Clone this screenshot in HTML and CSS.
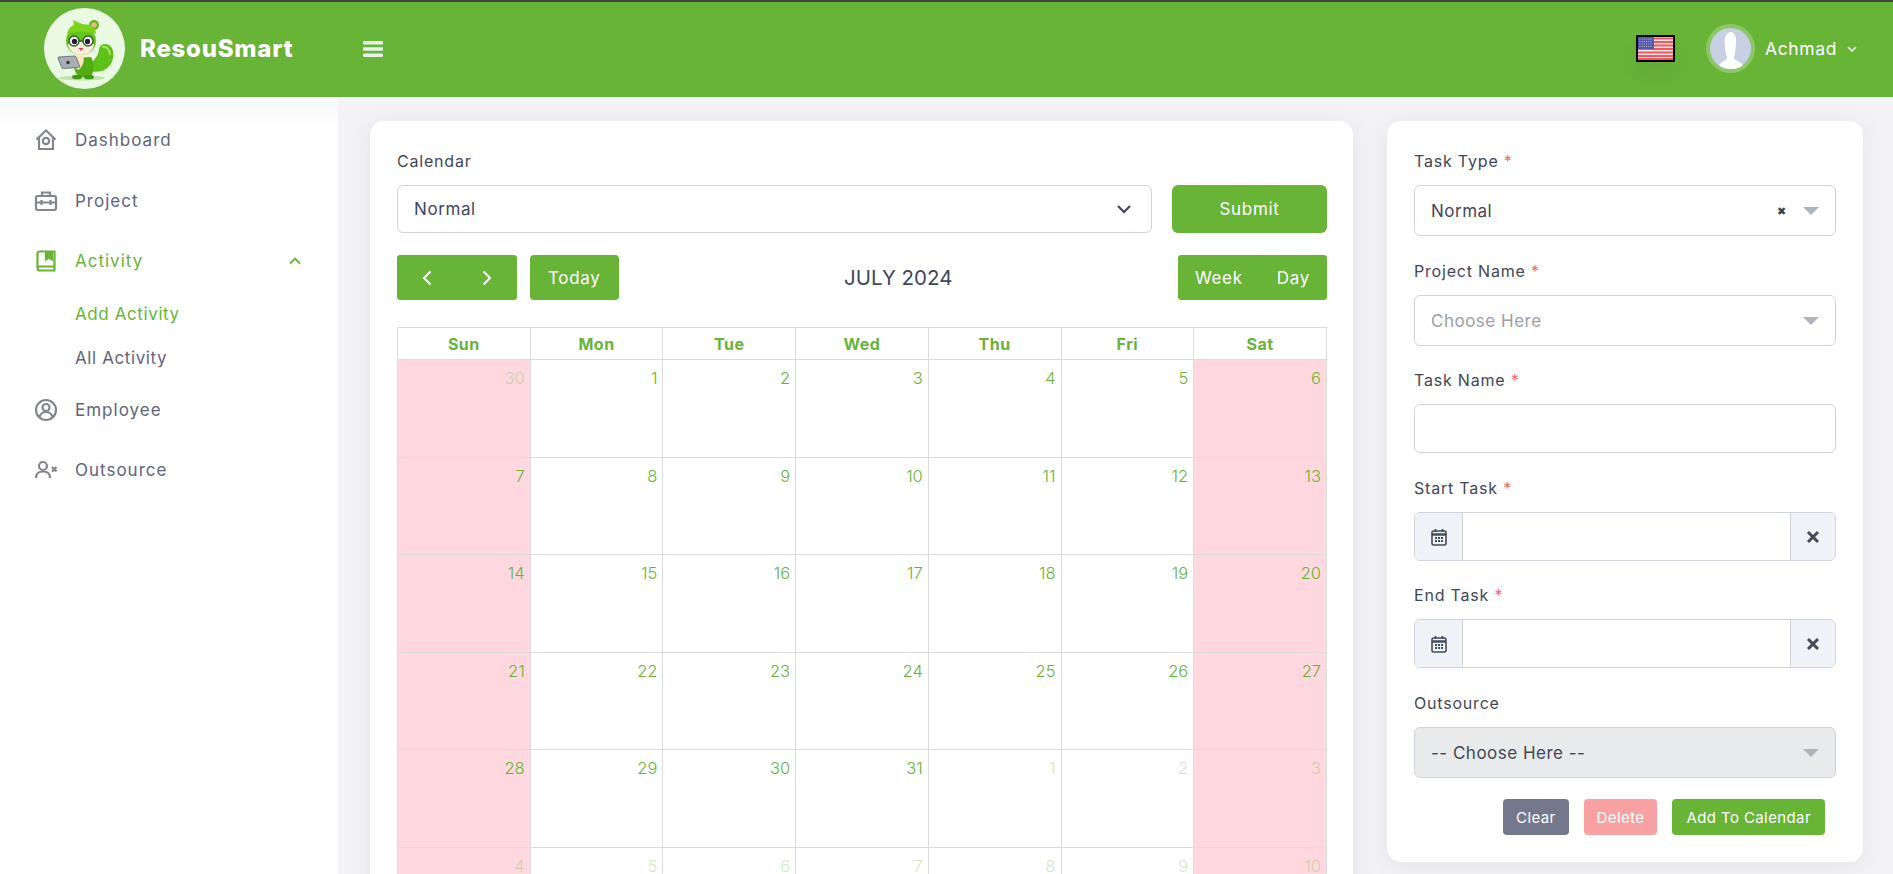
FILE: index.html
```html
<!DOCTYPE html>
<html lang="en">
<head>
	<meta charset="UTF-8">
	<title>ResouSmart - Add Activity</title>
	<link rel="stylesheet" href="styles.css">
</head>
<body>
	<header class="topbar">
		<div class="logo-circle">
			<svg viewBox="0 0 81 81" width="81" height="81">
				<ellipse cx="38" cy="70" rx="23" ry="2.5" fill="#bfe3ae"/>
				<path d="M46 63c11 3 21-2 23-13 2-9-3-15-9-14-5 1-5 6-6 10-2 5-9 9-8 17z" fill="#5fc01a"/>
				<path d="M58 39c5-1 8 3 8 8" stroke="#a2e35a" stroke-width="2" fill="none"/>
				<path d="M30 50c-1 10 1 18 8 19h8c4-3 5-14 1-20z" fill="#52ad12"/>
				<path d="M29 48c-1 7 1 12 5 14 5-3 7-10 5-15z" fill="#fbe3c0"/>
				<ellipse cx="33" cy="69" rx="5" ry="2.3" fill="#3f9a12"/>
				<ellipse cx="45" cy="69" rx="5" ry="2.3" fill="#3f9a12"/>
				<circle cx="50" cy="17" r="5" fill="#58b814"/>
				<circle cx="50" cy="17" r="2.800" fill="#f2b48c"/>
				<ellipse cx="37" cy="33" rx="15" ry="14" fill="#63c41d"/>
				<path d="M23 26c1-5 4-8 7-9l-1-5 9 4 9 1c3 2 5 5 5 9-9-3-19-3-29 0z" fill="#7ed321"/>
				<path d="M24 37c2-5 8-5 13-3 5-2 11-2 13 3-1 6-7 10-13 10s-12-4-13-10z" fill="#fdeedb"/>
				<circle cx="30" cy="33" r="5" fill="#fff" stroke="#35602c" stroke-width="1.500"/>
				<circle cx="44" cy="33" r="5" fill="#fff" stroke="#35602c" stroke-width="1.500"/>
				<circle cx="30.500" cy="33.500" r="2.700" fill="#223"/>
				<circle cx="43.500" cy="33.500" r="2.700" fill="#223"/>
				<path d="M35 33h4" stroke="#35602c" stroke-width="1.400"/>
				<path d="M34.500 40h5l-2.500 3z" fill="#d8455a"/>
				<path d="M15 49l15-1c1 0 2 .5 2.500 2l3 8c.3 1-.3 1.500-1 1.500l-15 1c-1 0-1.500-.5-2-1.500l-3.500-9c-.2-.5.2-1 1-1z" fill="#a9aeb5" stroke="#5d6269" stroke-width=".8"/>
				<circle cx="24" cy="54.500" r="1.700" fill="#333"/>
			</svg>
		</div>
		<div class="brand">ResouSmart</div>
		<svg class="burger" viewBox="0 0 20 16" width="20" height="16">
			<rect width="20" height="3.500" y="0" rx="1"/>
			<rect width="20" height="3.500" y="6.200" rx="1"/>
			<rect width="20" height="3.500" y="12.500" rx="1"/>
		</svg>
		<div class="topbar-right">
			<svg class="flag" viewBox="0 0 39 27" width="39" height="27">
				<rect width="39" height="27" fill="#000"/>
				<rect x="2" y="2" width="35" height="23" fill="#fbe3e3"/>
				<path d="M2 3.500h35M2 7h35M2 10.500h35M2 14h35M2 17.500h35M2 21h35M2 24h35" stroke="#ee5a60" stroke-width="1.900"/>
				<rect x="2" y="2" width="16" height="12" fill="#5158a8"/>
				<path d="M3.500 4h13M3.500 6.500h13M3.500 9h13M3.500 11.500h13" stroke="#b9bde0" stroke-width="1" stroke-dasharray="1 1.200"/>
			</svg>
			<div class="avatar">
				<svg viewBox="0 0 41 41" width="41" height="41">
					<circle cx="20.500" cy="20.500" r="20.500" fill="#c8d0e3"/>
					<path d="M9 37c3-4 7-4 8-7-2-8-3-14-2-20 1-4 3-6 6-6 3 0 5 4 5 9 0 6-1 12-2 17 1 3 6 3 9 7-3 3-8 4-12 4s-9-1-12-4z" fill="#fff"/>
				</svg>
			</div>
			<span class="user-name">Achmad</span>
			<svg class="user-caret" viewBox="0 0 10 6" width="10" height="6"><path d="M1 1l4 4 4-4" fill="none" stroke="#fff" stroke-width="1.500"/></svg>
		</div>
	</header>

	<div class="layout">
		<aside class="sidebar">
			<a class="nav-item">
				<svg class="nav-icon" viewBox="0 0 24 24"><path d="M2.500 11.500L12 2.500l9.500 9M5 9.500V21h14V9.500"/><circle cx="12" cy="13" r="3.200"/></svg>
				Dashboard
			</a>
			<a class="nav-item">
				<svg class="nav-icon" viewBox="0 0 24 24"><rect x="2" y="7" width="20" height="14" rx="2"/><path d="M8 7V3.500h8V7M2 13.500h20M7.500 11v5M16.500 11v5"/></svg>
				Project
			</a>
			<a class="nav-item active">
				<svg class="nav-icon" viewBox="0 0 24 24"><path d="M20.500 17.500H5.500a2 2 0 0 0 0 4h15V2.500H5.500a2 2 0 0 0-2 2v15"/><path d="M12 2.500v8l3-2 3 2v-8" fill="#67b437"/></svg>
				Activity
				<svg class="nav-caret" viewBox="0 0 12 8" width="12" height="8"><path d="M1 6.500l5-5 5 5" fill="none" stroke="#67b437" stroke-width="1.800"/></svg>
			</a>
			<div class="subnav">
				<a class="sub-item active">Add Activity</a>
				<a class="sub-item">All Activity</a>
			</div>
			<a class="nav-item">
				<svg class="nav-icon" viewBox="0 0 24 24"><circle cx="12" cy="12" r="10"/><circle cx="12" cy="9.500" r="3.500"/><path d="M5.500 19c1-3.500 3.500-5 6.500-5s5.500 1.500 6.500 5"/></svg>
				Employee
			</a>
			<a class="nav-item">
				<svg class="nav-icon" viewBox="0 0 24 24"><circle cx="9" cy="8" r="4"/><path d="M2 20c0-4.500 3-6.500 7-6.500s7 2 7 6.500M18 9l4.500 4.500M22.500 9L18 13.500"/></svg>
				Outsource
			</a>
		</aside>

		<main class="content">
			<section class="card calendar-card">
				<label class="field-label">Calendar</label>
				<div class="calendar-select-row">
					<div class="select-box">
						Normal
						<svg class="select-chevron" viewBox="0 0 16 10" width="16" height="10"><path d="M2 2l6 6 6-6" fill="none" stroke="#3b4350" stroke-width="2"/></svg>
					</div>
					<button class="btn submit-btn">Submit</button>
				</div>
				<div class="calendar-toolbar">
					<div class="toolbar-left">
						<div class="btn-group">
							<button class="btn arrow-btn"><svg viewBox="0 0 10 16" width="10" height="16"><path d="M8.500 1.500L2 8l6.500 6.500" fill="none" stroke="#fff" stroke-width="2"/></svg></button>
							<button class="btn arrow-btn"><svg viewBox="0 0 10 16" width="10" height="16"><path d="M1.500 1.500L8 8l-6.500 6.500" fill="none" stroke="#fff" stroke-width="2"/></svg></button>
						</div>
						<button class="btn tool-btn">Today</button>
					</div>
					<h2 class="calendar-title">JULY 2024</h2>
					<div class="btn-group">
						<button class="btn tool-btn">Week</button>
						<button class="btn tool-btn">Day</button>
					</div>
				</div>
				<table class="month">
					<thead>
						<tr><th>Sun</th><th>Mon</th><th>Tue</th><th>Wed</th><th>Thu</th><th>Fri</th><th>Sat</th></tr>
					</thead>
					<tbody>
						<tr><td class="off other"><span>30</span></td><td><span>1</span></td><td><span>2</span></td><td><span>3</span></td><td><span>4</span></td><td><span>5</span></td><td class="off"><span>6</span></td></tr>
						<tr><td class="off"><span>7</span></td><td><span>8</span></td><td><span>9</span></td><td><span>10</span></td><td><span>11</span></td><td><span>12</span></td><td class="off"><span>13</span></td></tr>
						<tr><td class="off"><span>14</span></td><td><span>15</span></td><td><span>16</span></td><td><span>17</span></td><td><span>18</span></td><td><span>19</span></td><td class="off"><span>20</span></td></tr>
						<tr><td class="off"><span>21</span></td><td><span>22</span></td><td><span>23</span></td><td><span>24</span></td><td><span>25</span></td><td><span>26</span></td><td class="off"><span>27</span></td></tr>
						<tr><td class="off"><span>28</span></td><td><span>29</span></td><td><span>30</span></td><td><span>31</span></td><td class="other"><span>1</span></td><td class="other"><span>2</span></td><td class="off other"><span>3</span></td></tr>
						<tr><td class="off other"><span>4</span></td><td class="other"><span>5</span></td><td class="other"><span>6</span></td><td class="other"><span>7</span></td><td class="other"><span>8</span></td><td class="other"><span>9</span></td><td class="off other"><span>10</span></td></tr>
					</tbody>
				</table>
			</section>

			<section class="card form-card">
				<div class="form-group">
					<label class="field-label">Task Type <i>*</i></label>
					<div class="select2">
						<span>Normal</span>
						<span class="select2-clear">&#10006;</span>
						<span class="select2-arrow"></span>
					</div>
				</div>
				<div class="form-group">
					<label class="field-label">Project Name <i>*</i></label>
					<div class="select2">
						<span class="placeholder">Choose Here</span>
						<span class="select2-arrow"></span>
					</div>
				</div>
				<div class="form-group">
					<label class="field-label">Task Name <i>*</i></label>
					<input class="text-input" type="text">
				</div>
				<div class="form-group">
					<label class="field-label">Start Task <i>*</i></label>
					<div class="date-group">
						<span class="addon">
							<svg viewBox="0 0 16 18" width="16" height="18"><rect x="1" y="3" width="14" height="14" rx="1.500" fill="none" stroke="#434c5c" stroke-width="1.600"/><path d="M1 6.500h14" stroke="#434c5c" stroke-width="2.400"/><path d="M4.500 1v3M11.500 1v3" stroke="#434c5c" stroke-width="1.800"/><path d="M4 10h8M4 13h8" stroke="#434c5c" stroke-width="1.800" stroke-dasharray="2 1"/></svg>
						</span>
						<input class="date-input" type="text">
						<span class="addon addon-x">
							<svg viewBox="0 0 14 14" width="14" height="14"><path d="M2 2l10 10M12 2L2 12" stroke="#454c58" stroke-width="3"/></svg>
						</span>
					</div>
				</div>
				<div class="form-group">
					<label class="field-label">End Task <i>*</i></label>
					<div class="date-group">
						<span class="addon">
							<svg viewBox="0 0 16 18" width="16" height="18"><rect x="1" y="3" width="14" height="14" rx="1.500" fill="none" stroke="#434c5c" stroke-width="1.600"/><path d="M1 6.500h14" stroke="#434c5c" stroke-width="2.400"/><path d="M4.500 1v3M11.500 1v3" stroke="#434c5c" stroke-width="1.800"/><path d="M4 10h8M4 13h8" stroke="#434c5c" stroke-width="1.800" stroke-dasharray="2 1"/></svg>
						</span>
						<input class="date-input" type="text">
						<span class="addon addon-x">
							<svg viewBox="0 0 14 14" width="14" height="14"><path d="M2 2l10 10M12 2L2 12" stroke="#454c58" stroke-width="3"/></svg>
						</span>
					</div>
				</div>
				<div class="form-group">
					<label class="field-label">Outsource</label>
					<div class="select2 disabled">
						<span>-- Choose Here --</span>
						<span class="select2-arrow"></span>
					</div>
				</div>
				<div class="form-actions">
					<button class="btn small-btn clear-btn">Clear</button>
					<button class="btn small-btn delete-btn">Delete</button>
					<button class="btn small-btn add-btn">Add To Calendar</button>
				</div>
			</section>
		</main>
	</div>
</body>
</html>
```

FILE: styles.css
```css
* {
	box-sizing: border-box;
}

html, body {
	height: 100%;
}

body {
	margin: 0;
	overflow: hidden;
	background-color: #f3f3f7;
	font-family: "Inter", "Noto Sans", sans-serif;
	font-size: 15px;
	color: #3f4757;
}

.topbar {
	display: flex;
	align-items: center;
	height: 97px;
	padding-left: 44px;
	padding-bottom: 2px;
	border-top: 2px solid #454545;
	background-color: #67b437;
}

.logo-circle {
	width: 81px;
	height: 81px;
	border-radius: 50%;
	background-color: #e9f9e2;
	overflow: hidden;
}

.brand {
	margin-left: 15px;
	width: 223px;
	font-size: 24px;
	font-weight: 800;
	letter-spacing: .75px;
	color: #fff;
}

.burger {
	fill: #e9eef0;
}

.topbar-right {
	display: flex;
	align-items: center;
	margin-left: auto;
	padding-right: 36px;
}

.flag {
	box-shadow: 0 12px 18px rgba(60, 60, 60, .08);
}

.avatar {
	margin-left: 31px;
	padding: 4px;
	width: 49px;
	height: 49px;
	border-radius: 50%;
	background-color: rgba(255, 255, 255, .25);
}

.avatar svg {
	display: block;
}

.user-name {
	margin-left: 10px;
	font-size: 17.5px;
	letter-spacing: .6px;
	color: #fff;
}

.user-caret {
	margin-left: 10px;
}

.layout {
	display: flex;
	height: calc(100% - 97px);
}

.sidebar {
	flex: none;
	width: 338px;
	padding: 13px 37px 0 34px;
	background: linear-gradient(#f8f8fa, #fff 30px);
}

.nav-item {
	display: flex;
	align-items: center;
	height: 60.5px;
	font-size: 17px;
	letter-spacing: 1px;
	color: #5f647c;
}

.nav-item.active {
	color: #67b437;
}

.nav-icon {
	flex: none;
	width: 24px;
	height: 24px;
	margin-right: 17px;
	fill: none;
	stroke: #83878d;
	stroke-width: 2.2;
}

.active .nav-icon {
	stroke: #67b437;
}

.nav-caret {
	margin-left: auto;
}

.subnav {
	display: flex;
	flex-direction: column;
	padding-left: 41px;
}

.sub-item {
	height: 44px;
	line-height: 44px;
	font-size: 17px;
	letter-spacing: .6px;
	color: #5f647c;
}

.sub-item.active {
	color: #67b437;
}

.content {
	flex: 1;
	display: grid;
	grid-template-columns: 983px 476px;
	column-gap: 34px;
	align-items: start;
	padding: 24px 0 0 32px;
}

.card {
	border-radius: 14px;
	background-color: #fff;
	box-shadow: 0 4px 24px rgba(34, 41, 47, .08);
}

.calendar-card {
	padding: 27px 26px 0 27px;
}

.field-label {
	display: block;
	height: 24px;
	line-height: 27px;
	margin-bottom: 13px;
	font-size: 16px;
	letter-spacing: .8px;
	color: #3f4757;
}

.field-label i {
	font-style: normal;
	color: #f2686d;
}

.calendar-select-row {
	display: flex;
	justify-content: space-between;
}

.select-box {
	display: flex;
	align-items: center;
	justify-content: space-between;
	width: 755px;
	height: 48px;
	padding: 0 19px 0 16px;
	border: 1px solid #cfd3dc;
	border-radius: 6px;
	font-size: 17px;
	letter-spacing: .6px;
}

.btn {
	border: 0;
	border-radius: 4px;
	background-color: #67b437;
	font-family: inherit;
	font-size: 17px;
	letter-spacing: .7px;
	color: #fff;
}

.submit-btn {
	width: 155px;
	height: 48px;
	border-radius: 6px;
}

.calendar-toolbar {
	display: flex;
	justify-content: space-between;
	align-items: center;
	margin: 22px 0 27px;
	height: 45px;
}

.toolbar-left {
	display: flex;
	gap: 13px;
}

.btn-group {
	display: flex;
	border-radius: 4px;
	background-color: #67b437;
}

.arrow-btn {
	display: flex;
	align-items: center;
	justify-content: center;
	width: 60px;
	height: 45px;
}

.tool-btn {
	height: 45px;
	padding: 0 18px;
}

.btn-group .tool-btn {
	padding: 0 17px;
}

.calendar-title {
	margin: 0;
	font-size: 20.5px;
	font-weight: 400;
	color: #3f4757;
}

.month {
	width: 930px;
	table-layout: fixed;
	border-collapse: collapse;
}

.month th,
.month td {
	border: 1px solid #dcdcdc;
}

.month th {
	height: 32px;
	font-size: 16px;
	font-weight: 700;
	letter-spacing: .5px;
	color: #67b437;
}

.month td {
	height: 97.6px;
	padding: 8px 5px 0 0;
	vertical-align: top;
	text-align: right;
	font-size: 16.5px;
	font-weight: 300;
	color: #67b437;
}

.month td.off {
	background-color: #fed8de;
}

.month td.other span {
	opacity: .3;
}

.form-card {
	height: 741px;
	padding: 27px 27px 0 27px;
}

.form-group {
	height: 108px;
}

.form-group:nth-child(1) {
	height: 110px;
}

.form-group:nth-child(2),
.form-group:nth-child(6) {
	height: 109px;
}

.form-group:nth-child(4) {
	height: 107px;
}

.form-group .field-label {
	height: 37px;
	margin-bottom: 0;
}

.select2 {
	display: flex;
	align-items: center;
	height: 51px;
	padding: 0 16px 0 16px;
	border: 1px solid #cfd3dc;
	border-radius: 6px;
	font-size: 17px;
	letter-spacing: .5px;
}

.placeholder {
	color: #9b9ea6;
}

.select2-clear {
	margin-left: auto;
	font-size: 11px;
	color: #3b4350;
}

.select2-arrow {
	width: 0;
	height: 0;
	margin-left: 17px;
	border-left: 8px solid transparent;
	border-right: 8px solid transparent;
	border-top: 8px solid #adb4bc;
}

.select2 > span:first-child + .select2-arrow {
	margin-left: auto;
}

.select2.disabled {
	background-color: #e9eaec;
}

.text-input {
	display: block;
	width: 100%;
	height: 49px;
	border: 1px solid #cfd3dc;
	border-radius: 6px;
	outline: 0;
}

.date-group {
	display: flex;
	height: 49px;
	border: 1px solid #cfd3dc;
	border-radius: 6px;
	overflow: hidden;
}

.addon {
	flex: none;
	display: flex;
	align-items: center;
	justify-content: center;
	width: 48px;
	background-color: #eff2f7;
	border-right: 1px solid #cfd3dc;
}

.addon-x {
	width: 45px;
	border-right: 0;
	border-left: 1px solid #cfd3dc;
}

.date-input {
	flex: 1;
	min-width: 0;
	border: 0;
	outline: 0;
}

.form-actions {
	display: flex;
	justify-content: flex-end;
	gap: 15px;
	padding-right: 11px;
}

.small-btn {
	height: 36px;
	padding: 0 13px;
	font-size: 15px;
	letter-spacing: .4px;
}

.add-btn {
	padding: 0 14px;
}

.clear-btn {
	background-color: #74788d;
}

.delete-btn {
	background-color: #f8a0a2;
}
```
